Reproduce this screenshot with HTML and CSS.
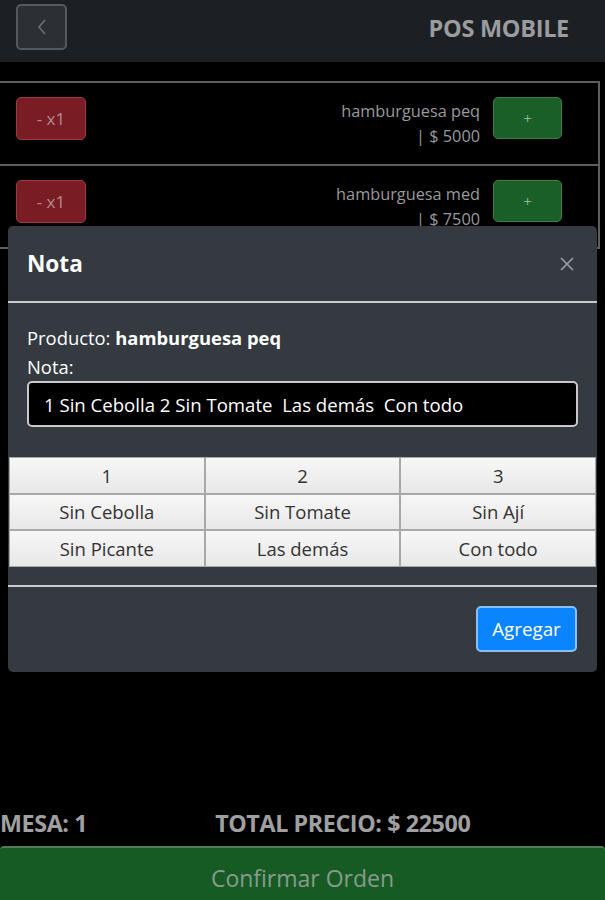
FILE: index.html
```html
<!DOCTYPE html>
<html lang="es">
<head>
<meta charset="utf-8">
<title>POS MOBILE</title>
<link rel="stylesheet" href="styles.css">
</head>
<body>
<div class="page">
  <header class="topbar">
    <button class="back-btn" aria-label="Volver">
      <svg width="14" height="18" viewBox="0 0 14 18"><path d="M10 2 L4 9 L10 16" fill="none" stroke="#6b6f73" stroke-width="1.6"/></svg>
    </button>
    <h1 class="brand">POS MOBILE</h1>
  </header>

  <main class="list">
    <div class="item">
      <button class="btn-minus">- x1</button>
      <div class="item-right">
        <div class="item-info">
          <div>hamburguesa peq</div>
          <div>| $ 5000</div>
        </div>
        <button class="btn-plus">+</button>
      </div>
    </div>
    <div class="item">
      <button class="btn-minus">- x1</button>
      <div class="item-right">
        <div class="item-info">
          <div>hamburguesa med</div>
          <div>| $ 7500</div>
        </div>
        <button class="btn-plus">+</button>
      </div>
    </div>
  </main>

  <footer class="summary">
    <div class="totals">
      <span>MESA: 1</span>
      <span>TOTAL PRECIO: $ 22500</span>
    </div>
    <button class="confirm">Confirmar Orden</button>
  </footer>
</div>

<div class="modal">
  <div class="modal-header">
    <h2>Nota</h2>
    <button class="close" aria-label="Cerrar">
      <svg width="16" height="16" viewBox="0 0 16 16"><path d="M2 2 L14 14 M14 2 L2 14" stroke="#9aa0a6" stroke-width="1.6"/></svg>
    </button>
  </div>
  <div class="modal-body">
    <p class="line">Producto: <b>hamburguesa peq</b></p>
    <p class="line">Nota:</p>
    <input class="note" type="text" value="1 Sin Cebolla 2 Sin Tomate  Las demás  Con todo">
    <div class="options">
      <button>1</button><button>2</button><button>3</button>
      <button>Sin Cebolla</button><button>Sin Tomate</button><button>Sin Ají</button>
      <button>Sin Picante</button><button>Las demás</button><button>Con todo</button>
    </div>
  </div>
  <div class="modal-footer">
    <button class="add">Agregar</button>
  </div>
</div>
</body>
</html>
```

FILE: styles.css
```css
* { box-sizing: border-box; }
html, body { margin: 0; padding: 0; }
body {
  background: #000;
  font-family: "Open Sans", "Noto Sans", sans-serif;
  color: #aaa;
  width: 605px;
  height: 900px;
  overflow: hidden;
  position: relative;
}
button { font-family: inherit; cursor: pointer; }

.page {
  height: 900px;
  display: flex;
  flex-direction: column;
}

.topbar {
  height: 62px;
  background: #1c1f23;
  display: flex;
  justify-content: space-between;
  align-items: flex-start;
  padding: 4px 36px 0 16px;
}
.back-btn {
  width: 51px;
  height: 46px;
  background: #2c3034;
  border: 2px solid #55595d;
  border-radius: 5px;
  display: flex;
  align-items: center;
  justify-content: center;
  padding: 0;
}
.brand {
  margin: 0;
  font-size: 23.5px;
  font-weight: 700;
  color: #9a9c9e;
  line-height: 48px;
  letter-spacing: -0.3px;
}

.list {
  flex: 1;
  padding-top: 21px;
  padding-right: 5px;
}
.item {
  border: 2px solid #5e5e5e;
  border-left: none;
  height: 85px;
  margin-top: -2px;
  display: flex;
  justify-content: space-between;
  align-items: flex-start;
  padding: 14px 36px 0 16px;
}
.btn-minus {
  width: 70px;
  height: 43px;
  background: #7a1c24;
  border: 1px solid #9a3a42;
  border-radius: 5px;
  color: #b48a8e;
  font-size: 17px;
}
.item-right {
  display: flex;
  align-items: flex-start;
  gap: 13px;
}
.item-info {
  text-align: right;
  font-size: 16.3px;
  line-height: 25px;
  color: #9a9a9a;
  margin-top: 2px;
}
.btn-plus {
  width: 69px;
  height: 42px;
  background: #1a5e28;
  border: 1px solid #3f7d48;
  border-radius: 5px;
  color: #8fb594;
  font-size: 15px;
}

.summary { display: flex; flex-direction: column; }
.totals {
  display: flex;
  gap: 128px;
  font-weight: 700;
  font-size: 23.3px;
  color: #a0a0a0;
  height: 36px;
  line-height: 26px;
  letter-spacing: -0.4px;
}
.confirm {
  height: 54px;
  background: #165a24;
  border: none;
  border-top: 2px solid #4f7d55;
  border-radius: 4px 4px 0 0;
  color: #8a9a8c;
  font-size: 23px;
  padding: 8px 0 0;
}

/* modal */
.modal {
  position: absolute;
  top: 226px;
  left: 8px;
  width: 589px;
  height: 446px;
  background: #343a40;
  border-radius: 5px;
  color: #fff;
  display: flex;
  flex-direction: column;
}
.modal-header {
  height: 77px;
  border-bottom: 2px solid #c9cbcd;
  display: flex;
  justify-content: space-between;
  align-items: center;
  padding: 0 22px 0 19px;
}
.modal-header h2 {
  margin: 0;
  font-size: 22.6px;
  font-weight: 700;
}
.close {
  background: none;
  border: none;
  padding: 0;
  display: flex;
}
.modal-body {
  padding: 20px 0 0;
  height: 284px;
  border-bottom: 2px solid #c9cbcd;
}
.line {
  margin: 0 0 0 19px;
  font-size: 18.4px;
  line-height: 29px;
}
.note {
  display: block;
  margin: 0 19px 0 19px;
  width: 551px;
  height: 46px;
  background: #000;
  border: 2px solid #c6c8ca;
  border-radius: 5px;
  color: #fff;
  font-family: inherit;
  font-size: 18.6px;
  padding: 0 15px;
}
.options {
  margin-top: 30px;
  display: grid;
  grid-template-columns: repeat(3, 1fr);
  padding: 0 1px;
}
.options button {
  height: 36.5px;
  background: linear-gradient(#f7f7f7, #e8e8e8);
  border: 1px solid #a8a8a8;
  color: #333;
  font-size: 18.5px;
  padding: 0;
}
.modal-footer {
  flex: 1;
  display: flex;
  justify-content: flex-end;
  align-items: flex-start;
  padding: 19px 20px 0 0;
}
.add {
  width: 101px;
  height: 46px;
  background: #0a84ff;
  border: 2px solid #8cc0f5;
  border-radius: 5px;
  color: #fff;
  font-size: 18.8px;
  padding: 0;
}
```
